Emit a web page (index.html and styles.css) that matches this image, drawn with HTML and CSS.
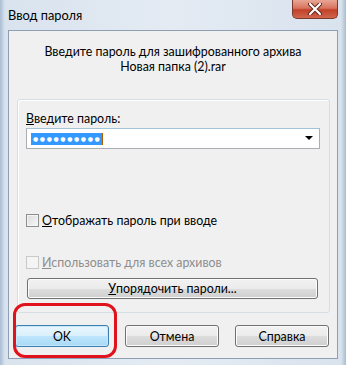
FILE: index.html
```html
<!DOCTYPE html>
<html lang="ru">
<head>
    <meta charset="UTF-8">
    <title>Ввод пароля</title>
    <link rel="stylesheet" href="styles.css">
</head>
<body>

    <div class="window">
        <div class="titlebar">
            <span class="title">Ввод пароля</span>
            <div class="close">
                <svg width="20" height="12" viewBox="0 0 20 12">
                    <path d="M5 1 L15 11 M15 1 L5 11" stroke="#5a2418" stroke-width="4" stroke-linecap="round"/>
                    <path d="M5 1 L15 11 M15 1 L5 11" stroke="#ffffff" stroke-width="2.2" stroke-linecap="round"/>
                </svg>
            </div>
        </div>

        <div class="client">
            <div class="prompt">
                <div>Введите пароль для зашифрованного архива</div>
                <div>Новая папка (2).rar</div>
            </div>

            <div class="group">
                <div class="label"><u>В</u>ведите пароль:</div>
                <div class="combo">
                    <span class="dots">●●●●●●●●●●</span><span class="caret"></span>
                    <span class="arrow"></span>
                </div>

                <label class="check check-show">
                    <span class="box"></span>
                    <span><u>О</u>тображать пароль при вводе</span>
                </label>

                <label class="check check-all disabled">
                    <span class="box"></span>
                    <span><u>И</u>спользовать для всех архивов</span>
                </label>

                <div class="btn btn-wide"><u>У</u>порядочить пароли...</div>
            </div>

            <div class="actions">
                <div class="ok-wrap">
                    <div class="btn btn-default">OK</div>
                    <div class="highlight"></div>
                </div>
                <div class="btn">Отмена</div>
                <div class="btn">Справка</div>
            </div>
        </div>
    </div>

</body>
</html>
```

FILE: styles.css
```css
body {
    margin: 0;
    background-color: #dfe7ef;
    font-family: Lato, "Open Sans", sans-serif;
    font-size: 12.4px;
    color: #000;
}
.window {
    width: 346px;
    height: 365px;
    box-sizing: border-box;
    padding: 0 8px 6px 8px;
    background: linear-gradient(90deg, #a9bcd2 0px, #d9e3ee 5px, #e4ebf3 50%, #d9e3ee calc(100% - 5px), #a9bcd2 100%);
    display: flex;
    flex-direction: column;
}
.titlebar {
    height: 30px;
    display: flex;
    justify-content: space-between;
    align-items: flex-start;
}
.title {
    margin-top: 7px;
    font-size: 12.8px;
}
.close {
    width: 46px;
    height: 19px;
    box-sizing: border-box;
    border: 1px solid #7b3a2e;
    border-top: none;
    border-radius: 0 0 5px 5px;
    background: linear-gradient(#e9a595 0%, #d8735f 45%, #c2412a 55%, #d1654c 100%);
    display: flex;
    justify-content: center;
    align-items: center;
}
.client {
    flex: 1;
    background-color: #f0f0f0;
    border: 1px solid #8e9fb3;
    display: flex;
    flex-direction: column;
}
.prompt {
    margin-top: 13px;
    text-align: center;
    line-height: 15px;
}
.group {
    margin: 25px 7px 0 8px;
    height: 214px;
    box-sizing: border-box;
    border: 1px solid #d5dfe5;
    border-radius: 3px;
    padding: 11px 9px 0 8px;
    box-shadow: inset 1px 1px 0 #ffffff;
}
.label {
    line-height: 15px;
}
.combo {
    position: relative;
    margin-top: 2px;
    height: 21px;
    box-sizing: border-box;
    background-color: #ffffff;
    border: 1px solid #abadb3;
    border-top-color: #a1c4d9;
    display: flex;
    align-items: center;
    padding-left: 4px;
}
.dots {
    background-color: #3399ff;
    color: #ffffff;
    font-family: "DejaVu Sans", sans-serif;
    font-size: 6px;
    letter-spacing: 1.6px;
    line-height: 12px;
    padding: 0 1px 0 2px;
}
.caret {
    width: 1px;
    height: 12px;
    background-color: #b15a00;
}
.arrow {
    position: absolute;
    right: 6px;
    top: 7px;
    border-left: 4px solid transparent;
    border-right: 4px solid transparent;
    border-top: 4px solid #000;
}
.check {
    display: flex;
    align-items: center;
    gap: 3px;
    line-height: 15px;
}
.check-show {
    margin-top: 64px;
}
.check-all {
    margin-top: 27px;
}
.box {
    width: 13px;
    height: 13px;
    box-sizing: border-box;
    border: 1px solid #8e8f8f;
    background: linear-gradient(135deg, #dcdcdc, #f7f7f7);
    box-shadow: inset 0 0 0 1px #f4f4f4;
}
.disabled {
    color: #8d8d8d;
}
.disabled .box {
    border-color: #c9c9c9;
    background: #f4f4f4;
}
.btn {
    height: 22px;
    box-sizing: border-box;
    border: 1px solid #707070;
    border-radius: 3px;
    background: linear-gradient(#f2f2f2 0%, #ebebeb 50%, #dddddd 51%, #cfcfcf 100%);
    box-shadow: inset 0 0 0 1px #fcfcfc;
    display: flex;
    justify-content: center;
    align-items: center;
    width: 94px;
}
.btn-wide {
    width: auto;
    margin: 8px 2px 0 1px;
    height: 21px;
}
.actions {
    display: flex;
    gap: 16px;
    margin: 12px 0 0 6px;
}
.ok-wrap {
    position: relative;
}
.btn-default {
    border-color: #3c7fb1;
    background: linear-gradient(#eaf6fd 0%, #d9f0fc 50%, #bee6fd 51%, #a7d9f5 100%);
    box-shadow: inset 0 0 0 1px #c5e7f9;
}
.highlight {
    position: absolute;
    left: -2px;
    top: -22px;
    width: 104px;
    height: 55px;
    box-sizing: border-box;
    border: 3px solid #e0121c;
    border-radius: 12px;
}
```
